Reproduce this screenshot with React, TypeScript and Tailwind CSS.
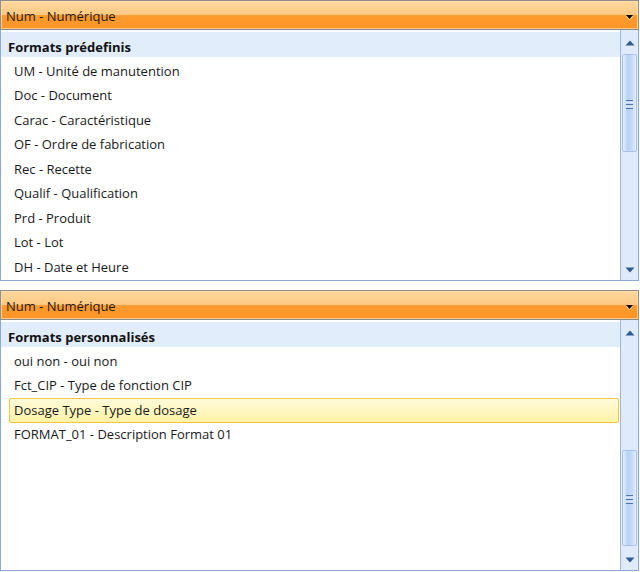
import React from "react";

const font = { fontFamily: '"Segoe UI", "Open Sans", "Noto Sans", sans-serif' };

function Combo() {
  return (
    <div className="relative h-[30px] border border-[#8d8d8d] bg-[linear-gradient(#ffd8a0_0%,#ffc982_48%,#ff9b2e_52%,#ff9426_100%)]">
      <div className="absolute inset-0 border border-[#ffe1a8] opacity-70" />
      <div className="relative flex h-full items-center pl-[5px] pt-[3px] text-[13px] text-[#1a1a1a]">Num - Numérique</div>
      <svg className="absolute right-[4px] top-[13px]" width="9" height="7" viewBox="0 0 9 7">
        <path d="M1 2 L8 2 L4.5 6 Z" fill="#ffffff" opacity="0.8" />
        <path d="M1 1 L8 1 L4.5 5 Z" fill="#000000" />
      </svg>
    </div>
  );
}

function ScrollBar({ thumbTop, thumbH }: { thumbTop: number; thumbH: number }) {
  return (
    <div className="relative w-[18px] shrink-0 border-l border-[#9db7dd] bg-[#dfeafa]">
      <svg className="absolute left-[4px] top-[10px]" width="10" height="6" viewBox="0 0 10 6">
        <path d="M0.5 5.5 L5 0.5 L9.5 5.5 Z" fill="#2f5a96" />
      </svg>
      <div
        className="absolute left-[1px] right-[1px] rounded-[2px] border border-[#a8c3e8] bg-[linear-gradient(90deg,#e6f0fc_0%,#b7d2f5_35%,#c6dcf8_70%,#e3eefc_100%)]"
        style={{ top: thumbTop, height: thumbH }}
      >
        <div className="absolute left-[3px] right-[3px] flex flex-col gap-[1px]" style={{ top: thumbH / 2 - 4 }}>
          <div className="h-[1px] bg-[#4f76b0]" />
          <div className="h-[1px] bg-[#dfeafa]" />
          <div className="h-[1px] bg-[#4f76b0]" />
          <div className="h-[1px] bg-[#dfeafa]" />
          <div className="h-[1px] bg-[#4f76b0]" />
        </div>
      </div>
      <svg className="absolute bottom-[7px] left-[4px]" width="10" height="6" viewBox="0 0 10 6">
        <path d="M0.5 0.5 L9.5 0.5 L5 5.5 Z" fill="#2f5a96" />
      </svg>
    </div>
  );
}

function Row({ text, selected }: { text: string; selected?: boolean }) {
  if (selected) {
    return (
      <div className="ml-[8px] mr-[1px] flex h-[24.5px] items-center rounded-[2px] border border-[#f4c543] bg-[linear-gradient(#fffbdc,#fff3a4)] pl-[4px] text-[13px] text-[#1a1a1a]">
        {text}
      </div>
    );
  }
  return <div className="flex h-[24.5px] items-center pl-[13px] text-[13px] text-[#1a1a1a]">{text}</div>;
}

function List({
  title,
  items,
  selected,
  thumbTop,
  thumbH,
  height,
}: {
  title: string;
  items: string[];
  selected?: number;
  thumbTop: number;
  thumbH: number;
  height: number;
}) {
  return (
    <div className="flex border-x border-b border-[#8eaad4] bg-white" style={{ height }}>
      <div className="flex flex-1 flex-col overflow-hidden pt-[2px]">
        <div className="flex h-[25px] shrink-0 items-center bg-[#e2edfb] pl-[7px] pt-[7px] text-[13px] font-bold text-[#111]">{title}</div>
        <div className="pt-[2px]">
          {items.map((t, i) => (
            <Row key={t} text={t} selected={i === selected} />
          ))}
        </div>
      </div>
      <ScrollBar thumbTop={thumbTop} thumbH={thumbH} />
    </div>
  );
}

export default function App() {
  return (
    <div className="relative h-[572px] w-[640px] overflow-hidden bg-white" style={font}>
      <div className="w-[639px]">
        <Combo />
        <List
          title="Formats prédefinis"
          items={[
            "UM - Unité de manutention",
            "Doc - Document",
            "Carac - Caractéristique",
            "OF - Ordre de fabrication",
            "Rec - Recette",
            "Qualif - Qualification",
            "Prd - Produit",
            "Lot - Lot",
            "DH - Date et Heure",
          ]}
          thumbTop={24}
          thumbH={98}
          height={251}
        />
        <div className="h-[9px]" />
        <Combo />
        <List
          title="Formats personnalisés"
          items={["oui non - oui non", "Fct_CIP - Type de fonction CIP", "Dosage Type - Type de dosage", "FORMAT_01 - Description Format 01"]}
          selected={2}
          thumbTop={130}
          thumbH={96}
          height={251}
        />
      </div>
    </div>
  );
}
